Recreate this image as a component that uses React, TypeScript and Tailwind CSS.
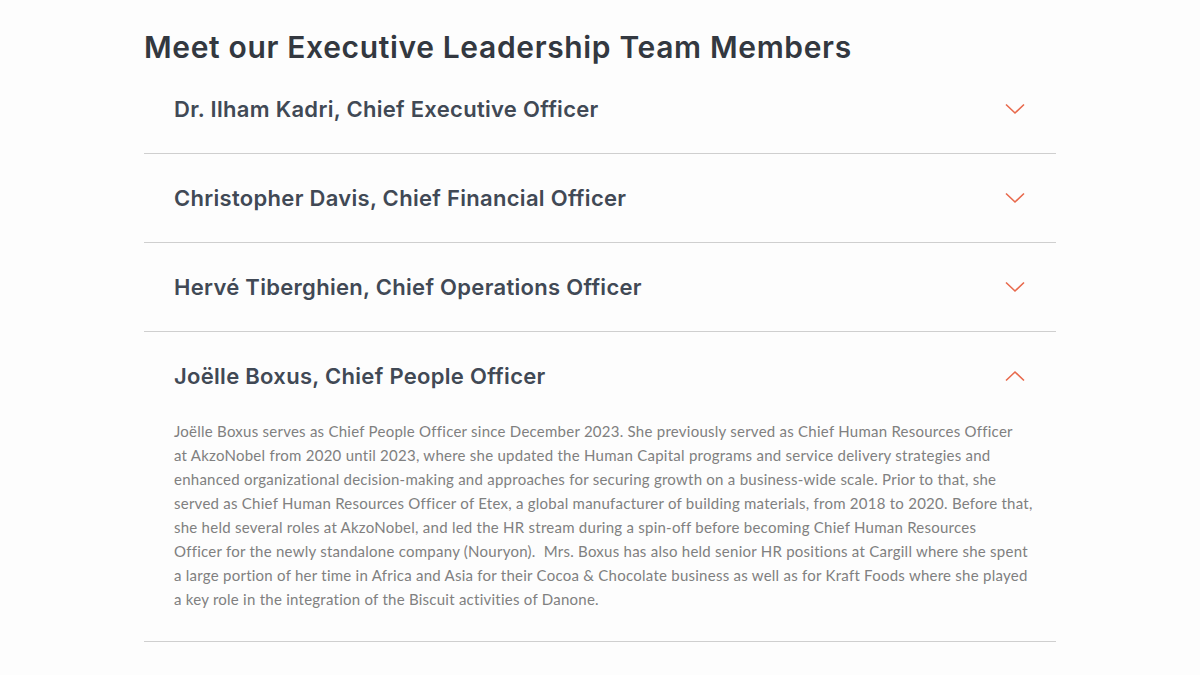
import { useState } from "react";

const members = [
  { name: "Dr. Ilham Kadri, Chief Executive Officer" },
  { name: "Christopher Davis, Chief Financial Officer" },
  { name: "Hervé Tiberghien, Chief Operations Officer" },
  { name: "Joëlle Boxus, Chief People Officer" },
];

// Lines copied as they wrap in the original column
const bio = [
  "Joëlle Boxus serves as Chief People Officer since December 2023. She previously served as Chief Human Resources Officer",
  "at AkzoNobel from 2020 until 2023, where she updated the Human Capital programs and service delivery strategies and",
  "enhanced organizational decision-making and approaches for securing growth on a business-wide scale. Prior to that, she",
  "served as Chief Human Resources Officer of Etex, a global manufacturer of building materials, from 2018 to 2020. Before that,",
  "she held several roles at AkzoNobel, and led the HR stream during a spin-off before becoming Chief Human Resources",
  "Officer for the newly standalone company (Nouryon).\u00a0 Mrs. Boxus has also held senior HR positions at Cargill where she spent",
  "a large portion of her time in Africa and Asia for their Cocoa & Chocolate business as well as for Kraft Foods where she played",
  "a key role in the integration of the Biscuit activities of Danone.",
];

function Chevron({ open }: { open: boolean }) {
  return (
    <svg width="22" height="12" viewBox="0 0 22 12" fill="none" stroke="#e8694c" strokeWidth={1.6}>
      {open ? <polyline points="2,10.5 11,2 20,10.5" /> : <polyline points="2,1.5 11,10 20,1.5" />}
    </svg>
  );
}

export default function App() {
  const [open, setOpen] = useState(3);

  return (
    <div className="min-h-[675px] bg-[#fdfdfd] font-['Inter',sans-serif]">
      <div className="mx-auto w-[912px] pt-[28px]">
        <h2 className="text-[30px] font-semibold leading-[38px] tracking-[0.65px] text-[#333840]">
          Meet our Executive Leadership Team Members
        </h2>

        <div>
          {members.map((m, i) => (
            <div key={m.name} className="border-b border-[#cfcfcf]">
              <button
                onClick={() => setOpen(open === i ? -1 : i)}
                className={`flex h-[88px] w-full items-center justify-between pl-[30px] pr-[30px] text-left ${
                  i === 0 ? "-mt-[1px]" : ""
                }`}
              >
                <span className="text-[22px] font-semibold tracking-[0.3px] text-[#414955]">{m.name}</span>
                <Chevron open={open === i} />
              </button>
              {open === i && (
                <p className="-mt-[1px] pb-[30px] pl-[30px] font-['Lato',sans-serif] text-[15px] leading-[24px] tracking-[0.25px] text-[#808080]">
                  {bio.map((line, k) => (
                    <span key={k} className="block whitespace-nowrap">
                      {line}
                    </span>
                  ))}
                </p>
              )}
            </div>
          ))}
        </div>
      </div>
    </div>
  );
}
